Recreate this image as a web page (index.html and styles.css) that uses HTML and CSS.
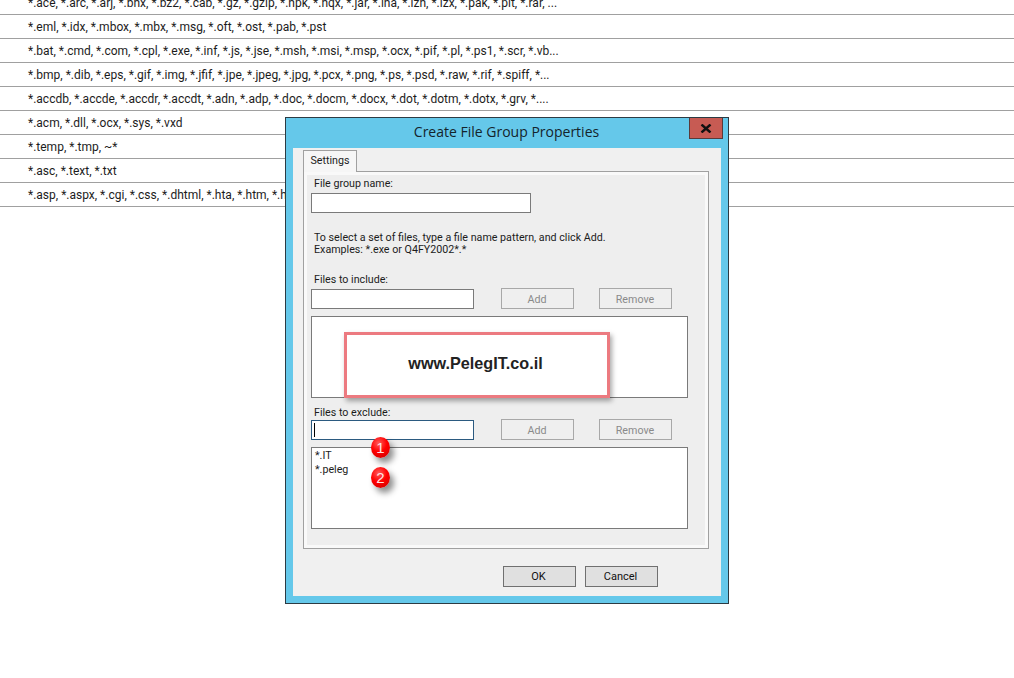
FILE: index.html
```html
<!DOCTYPE html>
<html lang="en">
<head>
<meta charset="utf-8">
<title>Create File Group Properties</title>
<link rel="stylesheet" href="styles.css">
</head>
<body>
<ul class="groups">
  <li>*.ace, *.arc, *.arj, *.bhx, *.bz2, *.cab, *.gz, *.gzip, *.hpk, *.hqx, *.jar, *.lha, *.lzh, *.lzx, *.pak, *.pit, *.rar, ...</li>
  <li>*.eml, *.idx, *.mbox, *.mbx, *.msg, *.oft, *.ost, *.pab, *.pst</li>
  <li>*.bat, *.cmd, *.com, *.cpl, *.exe, *.inf, *.js, *.jse, *.msh, *.msi, *.msp, *.ocx, *.pif, *.pl, *.ps1, *.scr, *.vb...</li>
  <li>*.bmp, *.dib, *.eps, *.gif, *.img, *.jfif, *.jpe, *.jpeg, *.jpg, *.pcx, *.png, *.ps, *.psd, *.raw, *.rif, *.spiff, *...</li>
  <li>*.accdb, *.accde, *.accdr, *.accdt, *.adn, *.adp, *.doc, *.docm, *.docx, *.dot, *.dotm, *.dotx, *.grv, *....</li>
  <li>*.acm, *.dll, *.ocx, *.sys, *.vxd</li>
  <li>*.temp, *.tmp, ~*</li>
  <li>*.asc, *.text, *.txt</li>
  <li>*.asp, *.aspx, *.cgi, *.css, *.dhtml, *.hta, *.htm, *.html, *.mht, *.php</li>
</ul>

<section class="dialog">
  <header class="titlebar">
    <h1 class="title">Create File Group Properties</h1>
    <button class="close" type="button" aria-label="Close">
      <svg class="close-icon" width="12" height="9" viewBox="0 0 12 9"><path d="M1.5 .5 L10.5 8.5 M10.5 .5 L1.5 8.5" stroke="#111" stroke-width="2.4" fill="none"/></svg>
    </button>
  </header>
  <div class="client">
    <div class="tab">Settings</div>
    <div class="panel">
      <div class="panel-inner">
        <div class="label">File group name:</div>
        <div class="input input-name"></div>
        <p class="hint">To select a set of files, type a file name pattern, and click Add.<br>Examples: *.exe or Q4FY2002*.*</p>
        <div class="label label-include">Files to include:</div>
        <div class="field-row">
          <div class="input input-short"></div>
          <div class="btn btn-off btn-add">Add</div>
          <div class="btn btn-off btn-remove">Remove</div>
        </div>
        <div class="listbox"></div>
        <div class="label label-exclude">Files to exclude:</div>
        <div class="field-row field-row-exclude">
          <div class="input input-short input-focus"><span class="caret"></span></div>
          <div class="btn btn-off btn-add">Add</div>
          <div class="btn btn-off btn-remove">Remove</div>
        </div>
        <div class="listbox">
          <div class="list-item">*.IT</div>
          <div class="list-item">*.peleg</div>
        </div>
      </div>
    </div>
    <footer class="actions">
      <div class="btn btn-on">OK</div>
      <div class="btn btn-on">Cancel</div>
    </footer>
  </div>
  <div class="watermark">www.PelegIT.co.il</div>
  <div class="badge badge-one">1</div>
  <div class="badge badge-two">2</div>
</section>
</body>
</html>
```
FILE: styles.css
```css
* { box-sizing: border-box; }
html, body { margin: 0; padding: 0; }
body {
  width: 1014px;
  height: 678px;
  overflow: hidden;
  background: #fff;
  color: #1c1c1c;
  font-family: Roboto, "Open Sans", sans-serif;
  position: relative;
}
.groups {
  list-style: none;
  margin: -9px 0 0;
  padding: 0;
}
.groups li {
  height: 24px;
  line-height: 24px;
  padding-left: 28px;
  font-size: 12px;
  border-bottom: 1px solid #a0a0a0;
  white-space: nowrap;
}
.dialog {
  position: absolute;
  left: 285px;
  top: 117px;
  width: 444px;
  height: 487px;
  background: #65c8ea;
  border: 1px solid #2c3b43;
  display: flex;
  flex-direction: column;
  padding: 0 7px 7px;
}
.titlebar {
  height: 30px;
  flex: none;
  display: flex;
  align-items: flex-start;
  justify-content: center;
  margin-right: 1px;
}
.title {
  margin: 0;
  font-family: "Open Sans", sans-serif;
  font-size: 14px;
  line-height: 28px;
  font-weight: 400;
  color: #14242c;
}
.close {
  position: absolute;
  top: 0;
  right: 5px;
  width: 34px;
  height: 21px;
  padding: 0;
  background: #c75b53;
  border: 1px solid #5a3a3a;
  border-top: 0;
  display: flex;
  align-items: center;
  justify-content: center;
}
.client {
  flex: 1;
  background: #f0f0f0;
  padding: 2px 0 0 10px;
  font-size: 10.7px;
  display: flex;
  flex-direction: column;
}
.tab {
  width: 54px;
  height: 22px;
  margin-bottom: -1px;
  background: #f6f6f6;
  border: 1px solid #a0a0a0;
  border-bottom: 0;
  line-height: 19px;
  text-align: center;
  position: relative;
  z-index: 1;
}
.panel {
  width: 406px;
  height: 378px;
  flex: none;
  background: #f9f9f9;
  border: 1px solid #a0a0a0;
  padding: 3px;
}
.panel-inner {
  height: 100%;
  background: #eeeeee;
  padding: 2px 4px 0;
}
.label {
  height: 14px;
  line-height: 14px;
  padding-left: 3px;
}
.label-include { margin-top: 17px; }
.label-exclude { margin-top: 8px; height: 13px; }
.input {
  height: 20px;
  background: #fff;
  border: 1px solid #7a7a7a;
}
.input-name { width: 220px; margin-top: 2px; }
.input-short { width: 163px; margin-top: 1px; }
.input-focus {
  border-color: #2b5a80;
  padding: 2px 0 0 2px;
}
.caret {
  display: block;
  width: 1px;
  height: 14px;
  background: #000;
}
.hint {
  margin: 19px 0 0;
  padding-left: 3px;
  line-height: 12px;
}
.field-row {
  display: flex;
  height: 21px;
  margin-top: 1px;
}
.field-row-exclude { margin-top: 0; }
.btn {
  width: 73px;
  height: 21px;
  text-align: center;
  line-height: 21px;
  border: 1px solid #a8a8a8;
}
.btn-off {
  background: #efefef;
  color: #8a8a8a;
  padding-right: 1px;
}
.btn-add { margin-left: 27px; }
.btn-remove { margin-left: 25px; }
.btn-on {
  background: #e0e0e0;
  border-color: #707070;
  color: #111;
  font-size: 11px;
  line-height: 20px;
  padding-right: 2px;
}
.listbox {
  width: 377px;
  height: 82px;
  margin-top: 7px;
  background: #fff;
  border: 1px solid #7a7a7a;
  padding: 1px 3px;
}
.list-item { line-height: 14px; }
.actions {
  display: flex;
  gap: 9px;
  margin: 17px 0 0 200px;
}
.watermark {
  position: absolute;
  left: 58px;
  top: 214px;
  width: 266px;
  height: 66px;
  background: #fff;
  border: 3px solid #ec7a80;
  box-shadow: 2px 3px 5px rgba(0, 0, 0, .35);
  font-family: "Liberation Sans", Arial, sans-serif;
  font-weight: 700;
  font-size: 16.2px;
  line-height: 56px;
  text-align: center;
  padding-right: 3px;
  color: #222;
}
.badge {
  position: absolute;
  left: 85px;
  width: 19px;
  height: 21px;
  border-radius: 50%;
  background: radial-gradient(circle at 40% 30%, #ff5a5a 0%, #f00 45%, #c80000 100%);
  box-shadow: 4px 5px 6px rgba(0, 0, 0, .45);
  color: #ffe4e4;
  font-family: "Liberation Sans", Arial, sans-serif;
  font-size: 15px;
  line-height: 21px;
  text-align: center;
}
.badge-one { top: 319px; }
.badge-two { top: 349px; }
```
